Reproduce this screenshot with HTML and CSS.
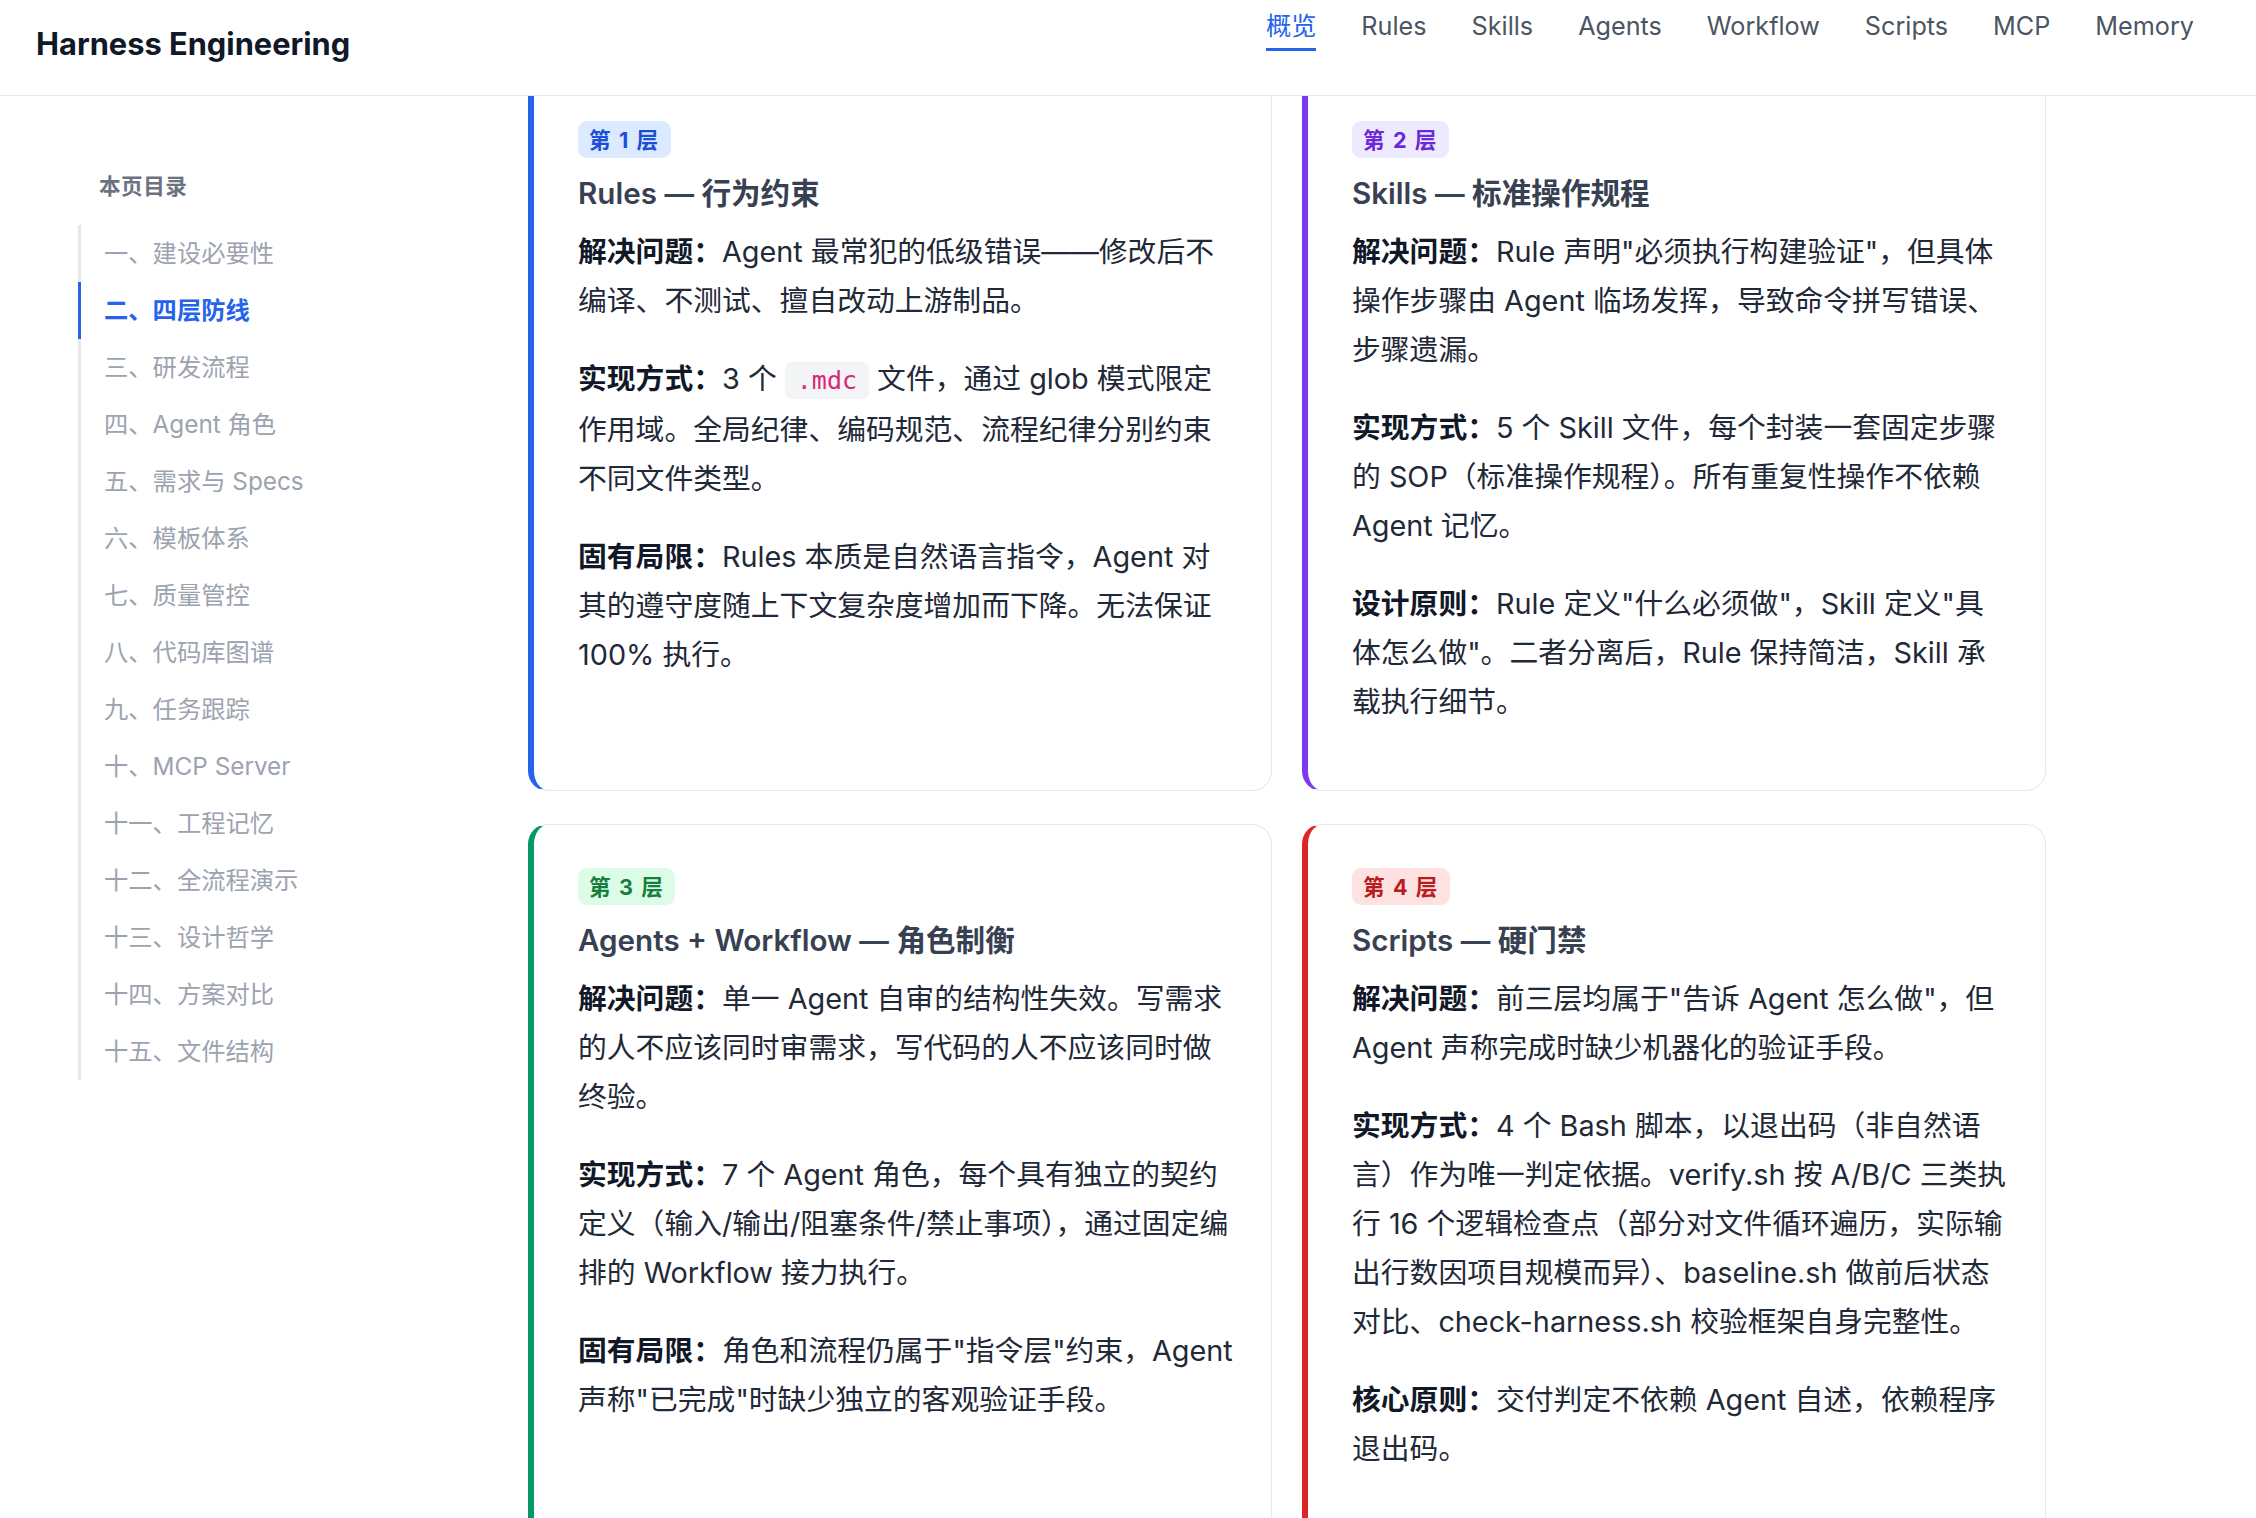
FILE: index.html
```html
<!DOCTYPE html>
<html lang="zh-CN">
<head>
    <meta charset="UTF-8">
    <meta name="viewport" content="width=device-width, initial-scale=1.0">
    <title>Harness Engineering</title>
    <link rel="stylesheet" href="styles.css">
</head>
<body>
    <header class="topbar">
        <div class="brand">Harness Engineering</div>
        <nav class="nav">
            <a class="nav-link active" href="#">概览</a>
            <a class="nav-link" href="#">Rules</a>
            <a class="nav-link" href="#">Skills</a>
            <a class="nav-link" href="#">Agents</a>
            <a class="nav-link" href="#">Workflow</a>
            <a class="nav-link" href="#">Scripts</a>
            <a class="nav-link" href="#">MCP</a>
            <a class="nav-link" href="#">Memory</a>
        </nav>
    </header>

    <div class="layout">
        <aside class="toc">
            <div class="toc-title">本页目录</div>
            <ul class="toc-list">
                <li><a href="#">一、建设必要性</a></li>
                <li><a class="active" href="#">二、四层防线</a></li>
                <li><a href="#">三、研发流程</a></li>
                <li><a href="#">四、Agent 角色</a></li>
                <li><a href="#">五、需求与 Specs</a></li>
                <li><a href="#">六、模板体系</a></li>
                <li><a href="#">七、质量管控</a></li>
                <li><a href="#">八、代码库图谱</a></li>
                <li><a href="#">九、任务跟踪</a></li>
                <li><a href="#">十、MCP Server</a></li>
                <li><a href="#">十一、工程记忆</a></li>
                <li><a href="#">十二、全流程演示</a></li>
                <li><a href="#">十三、设计哲学</a></li>
                <li><a href="#">十四、方案对比</a></li>
                <li><a href="#">十五、文件结构</a></li>
            </ul>
        </aside>

        <main class="layers">
            <section class="layer layer-blue">
                <div class="badge">第 1 层</div>
                <h3>Rules — 行为约束</h3>
                <p><b>解决问题：</b>Agent 最常犯的低级错误——修改后不编译、不测试、擅自改动上游制品。</p>
                <p><b>实现方式：</b>3 个 <code>.mdc</code> 文件，通过 glob 模式限定作用域。全局纪律、编码规范、流程纪律分别约束不同文件类型。</p>
                <p><b>固有局限：</b>Rules 本质是自然语言指令，Agent 对其的遵守度随上下文复杂度增加而下降。无法保证 100% 执行。</p>
            </section>

            <section class="layer layer-purple">
                <div class="badge">第 2 层</div>
                <h3>Skills — 标准操作规程</h3>
                <p><b>解决问题：</b>Rule 声明"必须执行构建验证"，但具体操作步骤由 Agent 临场发挥，导致命令拼写错误、步骤遗漏。</p>
                <p><b>实现方式：</b>5 个 Skill 文件，每个封装一套固定步骤的 SOP（标准操作规程）。所有重复性操作不依赖 Agent 记忆。</p>
                <p><b>设计原则：</b>Rule 定义"什么必须做"，Skill 定义"具体怎么做"。二者分离后，Rule 保持简洁，Skill 承载执行细节。</p>
            </section>

            <section class="layer layer-green">
                <div class="badge">第 3 层</div>
                <h3>Agents + Workflow — 角色制衡</h3>
                <p><b>解决问题：</b>单一 Agent 自审的结构性失效。写需求的人不应该同时审需求，写代码的人不应该同时做终验。</p>
                <p><b>实现方式：</b>7 个 Agent 角色，每个具有独立的契约定义（输入/输出/阻塞条件/禁止事项），通过固定编排的 Workflow 接力执行。</p>
                <p><b>固有局限：</b>角色和流程仍属于"指令层"约束，Agent 声称"已完成"时缺少独立的客观验证手段。</p>
            </section>

            <section class="layer layer-red">
                <div class="badge">第 4 层</div>
                <h3>Scripts — 硬门禁</h3>
                <p><b>解决问题：</b>前三层均属于"告诉 Agent 怎么做"，但 Agent 声称完成时缺少机器化的验证手段。</p>
                <p><b>实现方式：</b>4 个 Bash 脚本，以退出码（非自然语言）作为唯一判定依据。verify.sh 按 A/B/C 三类执行 16 个逻辑检查点（部分对文件循环遍历，实际输出行数因项目规模而异）、baseline.sh 做前后状态对比、check-harness.sh 校验框架自身完整性。</p>
                <p><b>核心原则：</b>交付判定不依赖 Agent 自述，依赖程序退出码。</p>
            </section>
        </main>
    </div>
</body>
</html>
```

FILE: styles.css
```css
body {
    margin: 0;
    font-family: Inter, "Noto Sans CJK SC", sans-serif;
    color: #1f2937;
    background: #fff;
}

/* sticky top bar, page content scrolls under it */
.topbar {
    position: fixed;
    top: 0;
    left: 0;
    right: 0;
    height: 95px;
    background: #fff;
    border-bottom: 1px solid #e5e7eb;
    display: flex;
    justify-content: space-between;
    align-items: flex-start;
    padding: 0 62px 0 36px;
    z-index: 10;
}
.brand {
    margin-top: 24px;
    font-size: 30.8px;
    line-height: 40px;
    font-weight: 700;
    color: #111827;
}
.nav {
    display: flex;
    gap: 45px;
    margin-top: 11px;
}
.nav-link {
    font-size: 25.2px;
    line-height: 30px;
    padding-bottom: 7px;
    border-bottom: 3px solid transparent;
    color: #4b5563;
    text-decoration: none;
}
.nav-link.active {
    color: #2563eb;
    border-bottom-color: #2563eb;
}

.layout {
    display: flex;
    padding: 77px 0 0 78px;
}

/* table of contents */
.toc {
    width: 450px;
    flex-shrink: 0;
    padding-top: 94px;
}
.toc-title {
    font-size: 21.6px;
    line-height: 30px;
    font-weight: 600;
    color: #6b7280;
    padding-left: 21px;
    margin-bottom: 24px;
    letter-spacing: 0.5px;
}
.toc-list {
    list-style: none;
    margin: 0;
    padding: 0;
    border-left: 3px solid #e5e7eb;
}
.toc-list a {
    display: block;
    margin-left: -3px;
    padding: 11px 0 11px 23px;
    border-left: 3px solid transparent;
    font-size: 24.3px;
    line-height: 35px;
    color: #9ca3af;
    text-decoration: none;
}
.toc-list a.active {
    color: #2563eb;
    font-weight: 600;
    border-left-color: #2563eb;
}

/* layer cards */
.layers {
    display: grid;
    grid-template-columns: 744px 744px;
    gap: 33px 30px;
}
.layer {
    background: #fff;
    border: 1px solid #e5e7eb;
    border-left: 6px solid;
    border-radius: 20px;
    padding: 43px 34px 35px 44px;
}
.badge {
    width: fit-content;
    font-size: 21.6px;
    line-height: 26px;
    padding: 5.5px 11px;
    border-radius: 9px;
    font-weight: 700;
    letter-spacing: 1.6px;
}
.layer h3 {
    margin: 14px 0 12px;
    font-size: 29.6px;
    line-height: 43px;
    font-weight: 600;
    color: #374151;
}
.layer p {
    margin: 0 0 29px;
    font-size: 28.8px;
    line-height: 49px;
}
.layer b {
    font-weight: 700;
    color: #111827;
}
.layer code {
    font-family: "DejaVu Sans Mono", monospace;
    font-size: 25px;
    color: #db2777;
    background: #f3f4f6;
    padding: 4px 12px;
    border-radius: 7px;
}

.layer-blue { border-left-color: #2563eb; }
.layer-blue .badge { background: #dbeafe; color: #1d4ed8; }
.layer-purple { border-left-color: #7c3aed; }
.layer-purple .badge { background: #ede9fe; color: #6d28d9; }
.layer-green { border-left-color: #059669; }
.layer-green .badge { background: #dcfce7; color: #15803d; }
.layer-red { border-left-color: #dc2626; }
.layer-red .badge { background: #fee2e2; color: #b91c1c; }
```
